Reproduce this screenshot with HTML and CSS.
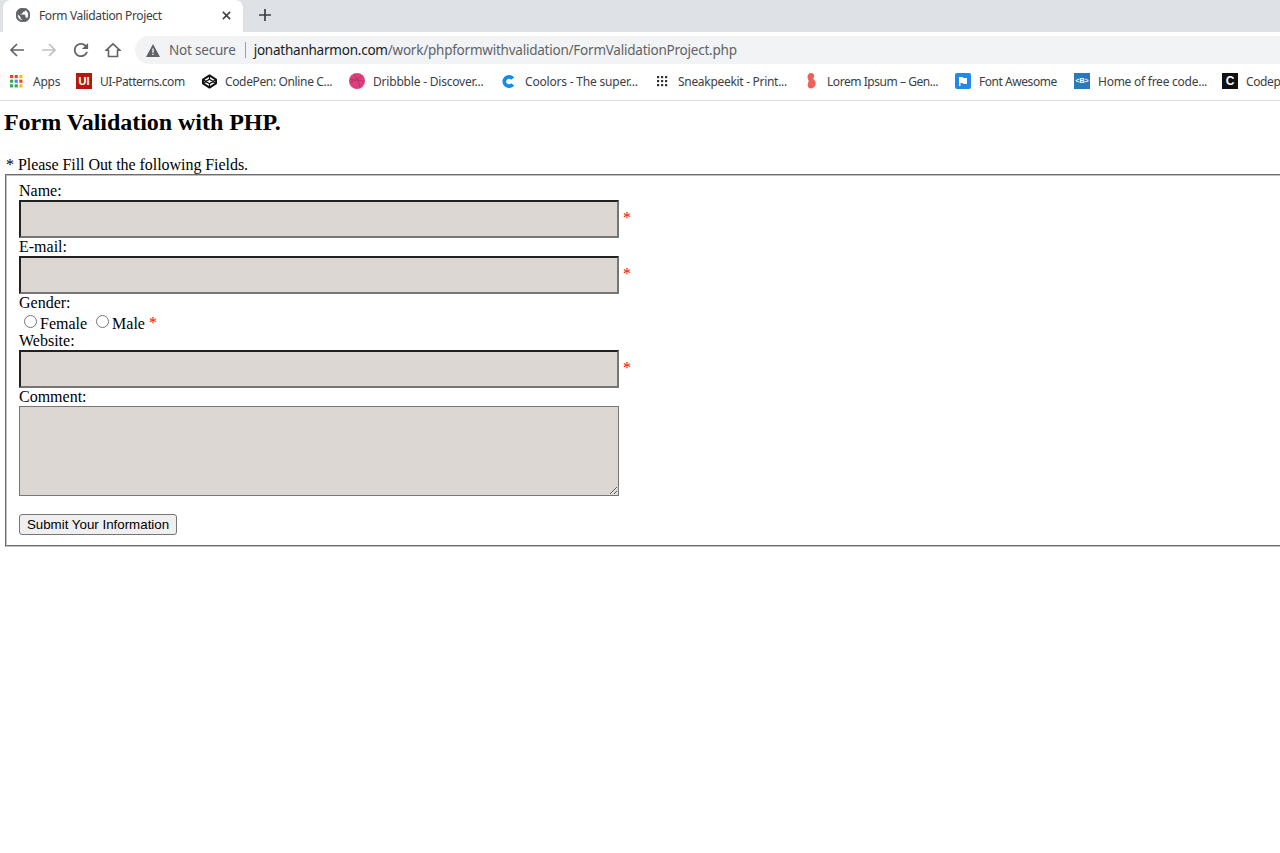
FILE: index.html
```html
<!DOCTYPE html>
<html lang="en">
<head>
<meta charset="utf-8">
<title>Form Validation Project</title>
<link rel="stylesheet" href="styles.css">
</head>
<body>
<header class="chrome">
  <div class="tabstrip">
    <div class="tab">
      <svg class="tab-globe" viewBox="2 2 20 20"><path fill="#5f6368" stroke="#5f6368" stroke-width="1.200" d="M12 2C6.480 2 2 6.480 2 12s4.480 10 10 10 10-4.480 10-10S17.520 2 12 2zm-1 17.930c-3.950-.490-7-3.850-7-7.930 0-.620.080-1.210.210-1.790L9 15v1c0 1.100.900 2 2 2v1.930zm6.900-2.540c-.260-.810-1-1.390-1.900-1.390h-1v-3c0-.550-.450-1-1-1H8v-2h2c.550 0 1-.450 1-1V7h2c1.100 0 2-.900 2-2v-.410c2.930 1.190 5 4.060 5 7.410 0 2.080-.800 3.970-2.100 5.390z"/></svg>
      <span class="tab-title">Form Validation Project</span>
      <svg class="tab-close" viewBox="0 0 10 10"><path d="M1 1l8 8M9 1l-8 8" stroke="#3c4043" stroke-width="1.700"/></svg>
    </div>
    <svg class="new-tab" viewBox="0 0 12 12"><path d="M6 0v12M0 6h12" stroke="#3c4043" stroke-width="1.700"/></svg>
  </div>
  <div class="toolbar">
    <svg class="nav-icon" viewBox="0 0 16 16"><path d="M15 8H2M8 2L2 8l6 6" fill="none" stroke="#5f6368" stroke-width="1.700"/></svg>
    <svg class="nav-icon" viewBox="0 0 16 16"><path d="M1 8h13M8 2l6 6-6 6" fill="none" stroke="#bdc1c6" stroke-width="1.700"/></svg>
    <svg class="nav-icon" viewBox="3 3 18 18"><path fill="#5f6368" d="M17.650 6.350C16.200 4.900 14.210 4 12 4c-4.420 0-7.990 3.580-7.990 8s3.570 8 7.990 8c3.730 0 6.840-2.550 7.730-6h-2.080c-.820 2.330-3.040 4-5.650 4-3.310 0-6-2.690-6-6s2.690-6 6-6c1.660 0 3.140.690 4.220 1.780L13 11h7V4l-2.350 2.350z"/></svg>
    <svg class="nav-icon" viewBox="0 0 16 16"><path d="M8 1.800L1.300 8.200h2.200v6.300h9V8.200h2.200z" fill="none" stroke="#5f6368" stroke-width="1.600"/></svg>
    <div class="omnibox">
      <svg class="warn" viewBox="0 0 14 13"><path d="M7 0l7 13H0z" fill="#5f6368"/><path d="M6.300 4.500h1.400v4.300H6.300zM6.300 9.700h1.400v1.400H6.300z" fill="#f1f3f4"/></svg>
      <span class="secure">Not secure</span>
      <span class="sep"></span>
      <span class="url"><span class="host">jonathanharmon.com</span>/work/phpformwithvalidation/FormValidationProject.php</span>
    </div>
  </div>
  <nav class="bookmarks">
    <div class="bm bm-apps"><svg class="bm-icon" viewBox="0 0 14 14"><g><rect x="0" y="0" width="3.400" height="3.400" fill="#ea4335"/><rect x="5" y="0" width="3.400" height="3.400" fill="#ea4335"/><rect x="10" y="0" width="3.400" height="3.400" fill="#fbbc04"/><rect x="0" y="5" width="3.400" height="3.400" fill="#34a853"/><rect x="5" y="5" width="3.400" height="3.400" fill="#4285f4"/><rect x="10" y="5" width="3.400" height="3.400" fill="#ea4335"/><rect x="0" y="10" width="3.400" height="3.400" fill="#34a853"/><rect x="5" y="10" width="3.400" height="3.400" fill="#34a853"/><rect x="10" y="10" width="3.400" height="3.400" fill="#fbbc04"/></g></svg><span>Apps</span></div>
    <div class="bm bm-ui"><span class="ui-logo">UI</span><span>UI-Patterns.com</span></div>
    <div class="bm bm-cp"><svg class="bm-icon" viewBox="0 0 16 16"><path d="M8 1.500L15 6v4l-7 4.500L1 10V6z" fill="none" stroke="#111" stroke-width="2" stroke-linejoin="round"/><path d="M1 6l7 4.500L15 6M1 10l7-4.500L15 10M8 1.500v4M8 10.500v4" fill="none" stroke="#111" stroke-width="1.400"/></svg><span>CodePen: Online C...</span></div>
    <div class="bm bm-dr"><svg class="bm-icon" viewBox="0 0 16 16"><circle cx="8" cy="8" r="8" fill="#dc3f7c"/><path d="M5 1.500c3 3 5.500 8 6 13M1 6.500c4 .500 8 0 11.500-3.500M1 10c4-3.500 9-3.500 14-1.500" fill="none" stroke="#b02a5f" stroke-width=".7"/></svg><span>Dribbble - Discover...</span></div>
    <div class="bm bm-co"><svg class="bm-icon" viewBox="0 0 16 16"><path d="M12.500 5A5 5 0 1 0 12.500 11" fill="none" stroke="#0e8cf1" stroke-width="4"/></svg><span>Coolors - The super...</span></div>
    <div class="bm bm-sn"><svg class="bm-icon" viewBox="0 0 16 16"><g fill="#333"><rect x="3" y="3" width="2.200" height="2.200"/><rect x="7" y="3" width="2.200" height="2.200"/><rect x="11" y="3" width="2.200" height="2.200"/><rect x="3" y="7" width="2.200" height="2.200"/><rect x="7" y="7" width="2.200" height="2.200"/><rect x="11" y="7" width="2.200" height="2.200"/><rect x="3" y="11" width="2.200" height="2.200"/><rect x="7" y="11" width="2.200" height="2.200"/><rect x="11" y="11" width="2.200" height="2.200"/></g></svg><span>Sneakpeekit - Print...</span></div>
    <div class="bm bm-lo"><svg class="bm-icon" viewBox="0 0 16 16"><path d="M8 0c3 0 4 3 2.500 5-.500.700 0 1.300.800 2 1.700 1.500 1.700 4 .700 6-1 2-5 3.500-6.500 1.500-1.200-1.500-1-3.500-.300-5 .600-1.200.600-1.800-.200-3C3.800 3.500 5 0 8 0z" fill="#f0605a"/></svg><span>Lorem Ipsum – Gen...</span></div>
    <div class="bm bm-fa"><svg class="bm-icon" viewBox="0 0 16 16"><rect width="16" height="16" rx="2" fill="#228ae6"/><path d="M4 4h3.500l1 1H12v6H8.500l-1-1H5.500v3H4z" fill="#fff"/></svg><span>Font Awesome</span></div>
    <div class="bm bm-fr"><span class="b-logo">&lt;B&gt;</span><span>Home of free code...</span></div>
    <div class="bm bm-cd"><span class="c-logo">C</span><span>Codep</span></div>
  </nav>
</header>
<main class="page">
  <h1 class="title">Form Validation with PHP.</h1>
  <p class="note">* Please Fill Out the following Fields.</p>
  <form class="form" action="#">
    <fieldset class="set">
      <label class="label" for="name">Name:</label>
      <div class="row"><input class="field" id="name" type="text"><span class="req">*</span></div>
      <label class="label" for="email">E-mail:</label>
      <div class="row"><input class="field" id="email" type="text"><span class="req">*</span></div>
      <div class="label">Gender:</div>
      <div class="gender">
        <input class="radio" type="radio" name="gender" id="female"><label for="female">Female</label>
        <input class="radio radio-next" type="radio" name="gender" id="male"><label for="male">Male</label>
        <span class="req-inline">*</span>
      </div>
      <label class="label" for="website">Website:</label>
      <div class="row"><input class="field" id="website" type="text"><span class="req">*</span></div>
      <label class="label" for="comment">Comment:</label>
      <textarea class="area" id="comment"></textarea>
      <button class="submit" type="button">Submit Your Information</button>
    </fieldset>
  </form>
</main>
</body>
</html>
```
FILE: styles.css
```css
html, body {
  margin: 0;
  padding: 0;
  height: 853px;
  overflow: hidden;
  background: #fff;
}
body {
  font-family: "Liberation Serif", serif;
  font-size: 16px;
  color: #000;
}
.chrome {
  font-family: "Noto Sans", "Open Sans", sans-serif;
  height: 101px;
  box-sizing: border-box;
  border-bottom: 1px solid #dadce0;
  display: flex;
  flex-direction: column;
}
.tabstrip {
  height: 32px;
  background: #dee1e6;
  display: flex;
  align-items: center;
}
.tab {
  width: 240px;
  height: 32px;
  box-sizing: border-box;
  margin-left: 3px;
  padding: 0 12px 2px 13px;
  background: #fff;
  border-radius: 8px 8px 0 0;
  display: flex;
  align-items: center;
}
.tab-globe {
  width: 14px;
  height: 14px;
  flex: none;
}
.tab-title {
  margin-left: 9px;
  flex: 1;
  font-size: 12px;
  letter-spacing: -0.37px;
  color: #3c4043;
  white-space: nowrap;
}
.tab-close {
  width: 9px;
  height: 9px;
  flex: none;
}
.new-tab {
  width: 12px;
  height: 12px;
  margin-left: 16px;
  margin-bottom: 2px;
}
.toolbar {
  height: 32px;
  background: #fff;
  display: flex;
  align-items: center;
  padding-left: 9px;
  gap: 16px;
}
.nav-icon {
  width: 16px;
  height: 16px;
  flex: none;
  margin-top: 4px;
}
.omnibox {
  flex: 1;
  height: 28px;
  margin-top: 4px;
  margin-left: -2px;
  background: #f1f3f4;
  border-radius: 14px 0 0 14px;
  display: flex;
  align-items: center;
  padding-left: 11px;
  white-space: nowrap;
}
.warn {
  width: 14px;
  height: 13px;
  flex: none;
}
.secure {
  margin-left: 9px;
  font-size: 13.5px;
  color: #5f6368;
  letter-spacing: -0.2px;
}
.sep {
  width: 1px;
  height: 16px;
  background: #9aa0a6;
  margin: 0 8px 0 9px;
}
.url {
  font-size: 13.5px;
  color: #5f6368;
  letter-spacing: -0.23px;
}
.host {
  color: #202124;
}
.bookmarks {
  height: 36px;
  background: #fff;
  display: flex;
  align-items: center;
  padding: 0 0 2px 10px;
  box-sizing: border-box;
  overflow: hidden;
  font-size: 12px;
  color: #3c4043;
  white-space: nowrap;
}
.bm {
  flex: none;
  display: flex;
  align-items: center;
}
.bm-apps { width: 66px; gap: 10px; letter-spacing: -0.25px; }
.bm-ui { width: 126px; gap: 8px; letter-spacing: -0.47px; }
.bm-cp { width: 147px; gap: 8px; letter-spacing: -0.36px; }
.bm-dr { width: 152px; gap: 8px; letter-spacing: -0.2px; }
.bm-co { width: 153px; gap: 9px; letter-spacing: -0.2px; }
.bm-sn { width: 149px; gap: 8px; letter-spacing: -0.3px; }
.bm-lo { width: 152px; gap: 8px; letter-spacing: -0.45px; }
.bm-fa { width: 119px; gap: 8px; letter-spacing: -0.45px; }
.bm-fr { width: 148px; gap: 8px; letter-spacing: -0.25px; }
.bm-cd { width: 58px; gap: 8px; letter-spacing: -0.4px; }
.bm-icon {
  width: 16px;
  height: 16px;
  flex: none;
}
.bm-apps .bm-icon { width: 13px; height: 13px; }
.bm-cp .bm-icon { width: 15px; height: 15px; }
.bm-co .bm-icon { width: 15px; height: 15px; }
.ui-logo {
  width: 16px;
  height: 16px;
  flex: none;
  background: #b8180c;
  color: #fff;
  font-family: "Liberation Sans", sans-serif;
  font-weight: 700;
  font-size: 11px;
  letter-spacing: 0;
  line-height: 16px;
  text-align: center;
}
.b-logo {
  width: 16px;
  height: 16px;
  flex: none;
  background: #2a7ab9;
  color: #fff;
  font-family: "Liberation Sans", sans-serif;
  font-weight: 700;
  font-size: 7px;
  letter-spacing: 0;
  line-height: 16px;
  text-align: center;
}
.c-logo {
  width: 16px;
  height: 16px;
  flex: none;
  background: #111;
  color: #fff;
  font-family: "Liberation Sans", sans-serif;
  font-weight: 700;
  font-size: 12px;
  letter-spacing: 0;
  line-height: 16px;
  text-align: center;
}
.page {
  padding-left: 3px;
}
.title {
  margin: 0 0 0 1px;
  padding-top: 7px;
  font-size: 24px;
  line-height: 28px;
  font-weight: 700;
  letter-spacing: -0.04px;
}
.note {
  margin: 20px 0 0 3px;
  line-height: 18px;
  letter-spacing: -0.05px;
}
.form {
  margin-left: 2px;
  width: 1400px;
}
.set {
  margin: 0;
  padding: 6px 12px 10px;
  border: 2px groove #c0c0c0;
  min-width: 0;
}
.label {
  display: block;
  height: 18px;
  line-height: 18px;
}
.row {
  display: flex;
  align-items: center;
  height: 38px;
}
.field {
  width: 600px;
  height: 38px;
  box-sizing: border-box;
  margin: 0;
  padding: 1px 2px;
  background: #dcd7d3;
  border: 2px inset #767676;
}
.req {
  margin-left: 4px;
  padding-bottom: 2px;
  color: #f00;
  line-height: 18px;
}
.gender {
  height: 20px;
  box-sizing: border-box;
  padding-top: 2px;
  line-height: 20px;
  display: flex;
  align-items: flex-start;
}
.radio {
  width: 13px;
  height: 13px;
  margin: 1px 3px 0 5px;
}
.radio-next {
  margin-left: 9px;
}
.req-inline {
  margin-left: 4px;
  margin-top: -1px;
  color: #f00;
}
.area {
  display: block;
  width: 600px;
  height: 90px;
  box-sizing: border-box;
  margin: 0;
  padding: 2px;
  background: #dcd7d3;
  border: 1px solid #767676;
}
.submit {
  display: block;
  margin: 18px 0 0;
  width: 158px;
  height: 21px;
  padding: 1px 6px;
  box-sizing: border-box;
  font-family: "Liberation Sans", sans-serif;
  font-size: 13.333px;
  color: #000;
  background: #efefef;
  border: 1px solid #767676;
  border-radius: 3px;
  white-space: nowrap;
}
```
